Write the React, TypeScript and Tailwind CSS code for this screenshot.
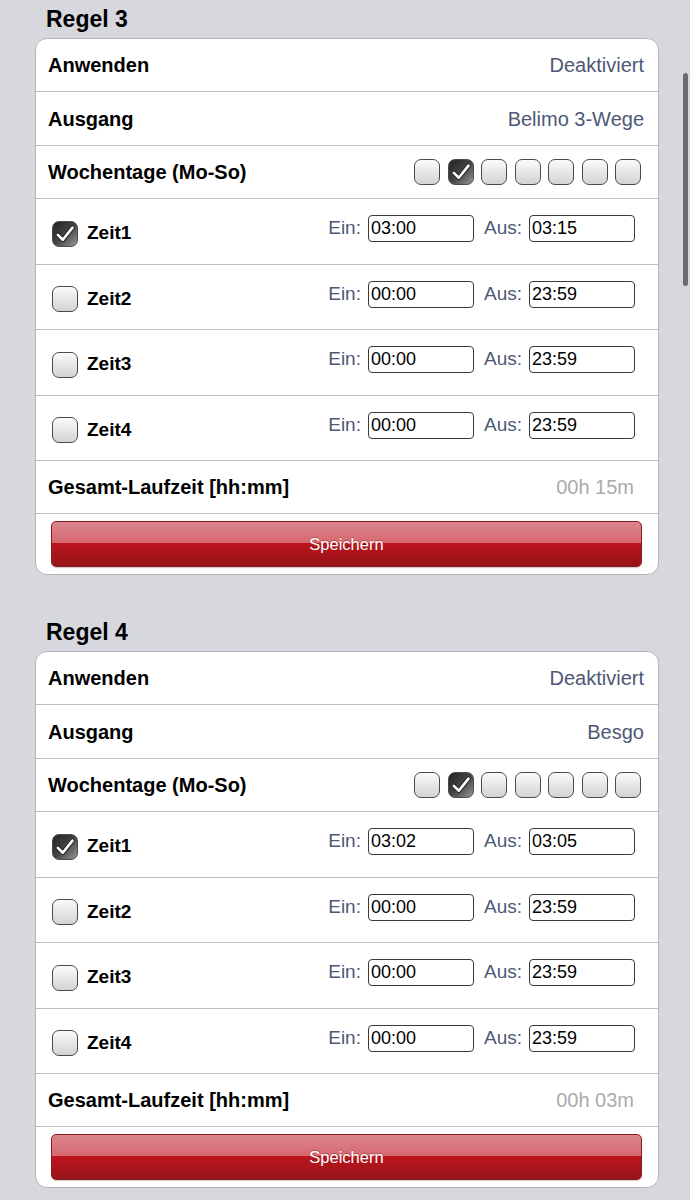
import React from 'react';

interface ZeitProps {
  name: string;
  active: boolean;
  ein: string;
  aus: string;
}

interface RegelProps {
  title: string;
  status: string;
  ausgang: string;
  days: boolean[];
  zeiten: ZeitProps[];
  gesamt: string;
}

const Check: React.FC<{ checked: boolean }> = ({ checked }) => (
  <span
    className={
      'flex h-[26px] w-[26px] shrink-0 items-center justify-center rounded-[7px] border-[1.5px] border-[#4a4a4c] ' +
      (checked
        ? 'bg-gradient-to-br from-[#222] via-[#444] to-[#9a9a9a]'
        : 'bg-gradient-to-b from-[#fbfbfb] to-[#d3d3d5]')
    }
  >
    {checked && (
      <svg width="22" height="22" viewBox="0 0 20 20">
        <path d="M3.5 10.8 L8 15.2 L16.8 4.2" fill="none" stroke="#222" strokeWidth="4.2" strokeLinecap="round" strokeLinejoin="round" />
        <path d="M3.5 10.8 L8 15.2 L16.8 4.2" fill="none" stroke="#fff" strokeWidth="2.4" strokeLinecap="round" strokeLinejoin="round" />
      </svg>
    )}
  </span>
);

const TimeInput: React.FC<{ value: string }> = ({ value }) => (
  <span className="flex h-[27px] w-[106px] items-center rounded-[4px] border border-[#3a3a3a] bg-white pl-[2px] text-[18px] text-black">
    {value}
  </span>
);

const Row: React.FC<{ label: string; height: string; children?: React.ReactNode }> = ({ label, height, children }) => (
  <div className={'flex items-center justify-between border-b border-[#bdbfc4] pl-[12px] pr-[14px] ' + height}>
    <span className="text-[20px] font-bold text-black">{label}</span>
    {children}
  </div>
);

const ZeitRow: React.FC<ZeitProps & { height: string }> = ({ name, active, ein, aus, height }) => (
  <div className={'flex items-center justify-between border-b border-[#bdbfc4] pl-[16px] pr-[23px] ' + height}>
    <div className="flex items-center gap-[9px] pt-[4px]">
      <Check checked={active} />
      <span className="text-[19px] font-bold text-black">{name}</span>
    </div>
    <div className="flex items-center pb-[6px] text-[19px] text-[#4d5875]">
      <span className="mr-[7px]">Ein:</span>
      <TimeInput value={ein} />
      <span className="ml-[10px] mr-[7px]">Aus:</span>
      <TimeInput value={aus} />
    </div>
  </div>
);

const zeitHeights = ['h-[66px]', 'h-[65px]', 'h-[66px]', 'h-[65px]'];

const Regel: React.FC<RegelProps> = ({ title, status, ausgang, days, zeiten, gesamt }) => (
  <section>
    <h2 className="flex h-[38px] items-center pl-[46px] text-[23px] font-bold text-black">{title}</h2>
    <div className="ml-[35px] w-[624px] overflow-hidden rounded-[12px] border border-[#b3b5ba] bg-white">
      <Row label="Anwenden" height="h-[53px]">
        <span className="text-[20px] text-[#4d5875]">{status}</span>
      </Row>
      <Row label="Ausgang" height="h-[54px]">
        <span className="text-[20px] text-[#4d5875]">{ausgang}</span>
      </Row>
      <div className="flex h-[53px] items-center justify-between border-b border-[#bdbfc4] pl-[12px] pr-[17px]">
        <span className="text-[20px] font-bold text-black">Wochentage (Mo-So)</span>
        <div className="flex gap-[7.5px]">
          {days.map((d, i) => (
            <Check key={i} checked={d} />
          ))}
        </div>
      </div>
      {zeiten.map((z, i) => (
        <ZeitRow key={z.name} {...z} height={zeitHeights[i]} />
      ))}
      <div className="flex h-[53px] items-center justify-between border-b border-[#bdbfc4] pl-[12px] pr-[24px]">
        <span className="text-[20px] font-bold text-black">Gesamt-Laufzeit [hh:mm]</span>
        <span className="text-[20px] text-[#ababab]">{gesamt}</span>
      </div>
      <div className="flex h-[60px] items-center pl-[15px] pr-[16px]">
        <button className="relative flex h-[46px] w-full items-center justify-center overflow-hidden rounded-[5px] border border-[#8e1b20] bg-gradient-to-b from-[#da868e] to-[#d0404a] text-[16.5px] text-white shadow-[0_1px_1px_rgba(0,0,0,0.2)]">
          <span className="absolute inset-x-0 bottom-0 h-[52%] bg-gradient-to-b from-[#bd151d] to-[#971319]" />
          <span className="relative [text-shadow:0_-1px_0_rgba(0,0,0,0.25)]">Speichern</span>
        </button>
      </div>
    </div>
  </section>
);

const defaultZeiten = (ein1: string, aus1: string): ZeitProps[] => [
  { name: 'Zeit1', active: true, ein: ein1, aus: aus1 },
  { name: 'Zeit2', active: false, ein: '00:00', aus: '23:59' },
  { name: 'Zeit3', active: false, ein: '00:00', aus: '23:59' },
  { name: 'Zeit4', active: false, ein: '00:00', aus: '23:59' },
];

const days = [false, true, false, false, false, false, false];

export default function App() {
  return (
    <div className="relative min-h-[1200px] bg-[#d7d8dd] font-['Liberation_Sans',Arial,sans-serif]">
      <div className="flex flex-col gap-[38px]">
        <Regel
          title="Regel 3"
          status="Deaktiviert"
          ausgang="Belimo 3-Wege"
          days={days}
          zeiten={defaultZeiten('03:00', '03:15')}
          gesamt="00h 15m"
        />
        <Regel
          title="Regel 4"
          status="Deaktiviert"
          ausgang="Besgo"
          days={days}
          zeiten={defaultZeiten('03:02', '03:05')}
          gesamt="00h 03m"
        />
      </div>
      {/* overlay scroll indicator */}
      <div className="absolute right-[2px] top-[73px] h-[213px] w-[5px] rounded-full bg-[#6c6c70]" />
    </div>
  );
}
